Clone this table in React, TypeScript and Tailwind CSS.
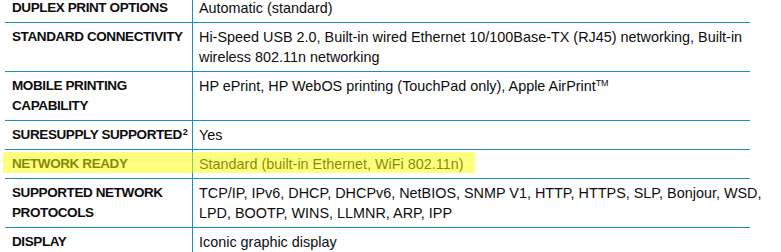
import React from "react";

type Row = {
  label: React.ReactNode;
  value: React.ReactNode;
  highlight?: boolean;
};

const rows: Row[] = [
  { label: "DUPLEX PRINT OPTIONS", value: "Automatic (standard)" },
  {
    label: "STANDARD CONNECTIVITY",
    value: (
      <>
        Hi-Speed USB 2.0, Built-in wired Ethernet 10/100Base-TX (RJ45) networking, Built-in
        <br />
        wireless 802.11n networking
      </>
    ),
  },
  {
    label: (
      <>
        MOBILE PRINTING
        <br />
        CAPABILITY
      </>
    ),
    value: (
      <>
        HP ePrint, HP WebOS printing (TouchPad only), Apple AirPrint
        <sup className="text-[9px] relative -top-[5px] tracking-[-0.3px]">TM</sup>
      </>
    ),
  },
  {
    label: (
      <>
        SURESUPPLY SUPPORTED<sup className="text-[9px] ml-[1px] tracking-normal">2</sup>
      </>
    ),
    value: "Yes",
  },
  {
    label: "NETWORK READY",
    value: "Standard (built-in Ethernet, WiFi 802.11n)",
    highlight: true,
  },
  {
    label: (
      <>
        SUPPORTED NETWORK
        <br />
        PROTOCOLS
      </>
    ),
    value: (
      <>
        TCP/IP, IPv6, DHCP, DHCPv6, NetBIOS, SNMP V1, HTTP, HTTPS, SLP, Bonjour, WSD,
        <br />
        LPD, BOOTP, WINS, LLMNR, ARP, IPP
      </>
    ),
  },
  { label: "DISPLAY", value: "Iconic graphic display" },
];

export default function App() {
  return (
    <div className="w-[781px] h-[252px] overflow-hidden bg-white text-[#0d0d0d] font-['Liberation_Sans',Arial,sans-serif]">
      <div className="ml-[5px] w-[745px] -mt-[7px] flex flex-col">
        {rows.map((row, i) => (
          <div key={i} className="relative flex border-t border-[#1c8dc8]">
            <div className="w-[188px] shrink-0 border-r border-[#1c8dc8] pl-[7px] py-1 leading-5 text-[13.5px] tracking-[-0.4px] font-bold whitespace-nowrap">
              {row.label}
            </div>
            <div className="flex-1 pl-[6px] py-1 leading-5 text-[14.4px] whitespace-nowrap">
              {row.value}
            </div>
            {/* translucent marker laid over the whole row */}
            {row.highlight && (
              <div className="absolute left-[-2px] top-[2px] w-[472px] h-[21px] bg-[#ffff00]/50 pointer-events-none" />
            )}
          </div>
        ))}
      </div>
    </div>
  );
}
